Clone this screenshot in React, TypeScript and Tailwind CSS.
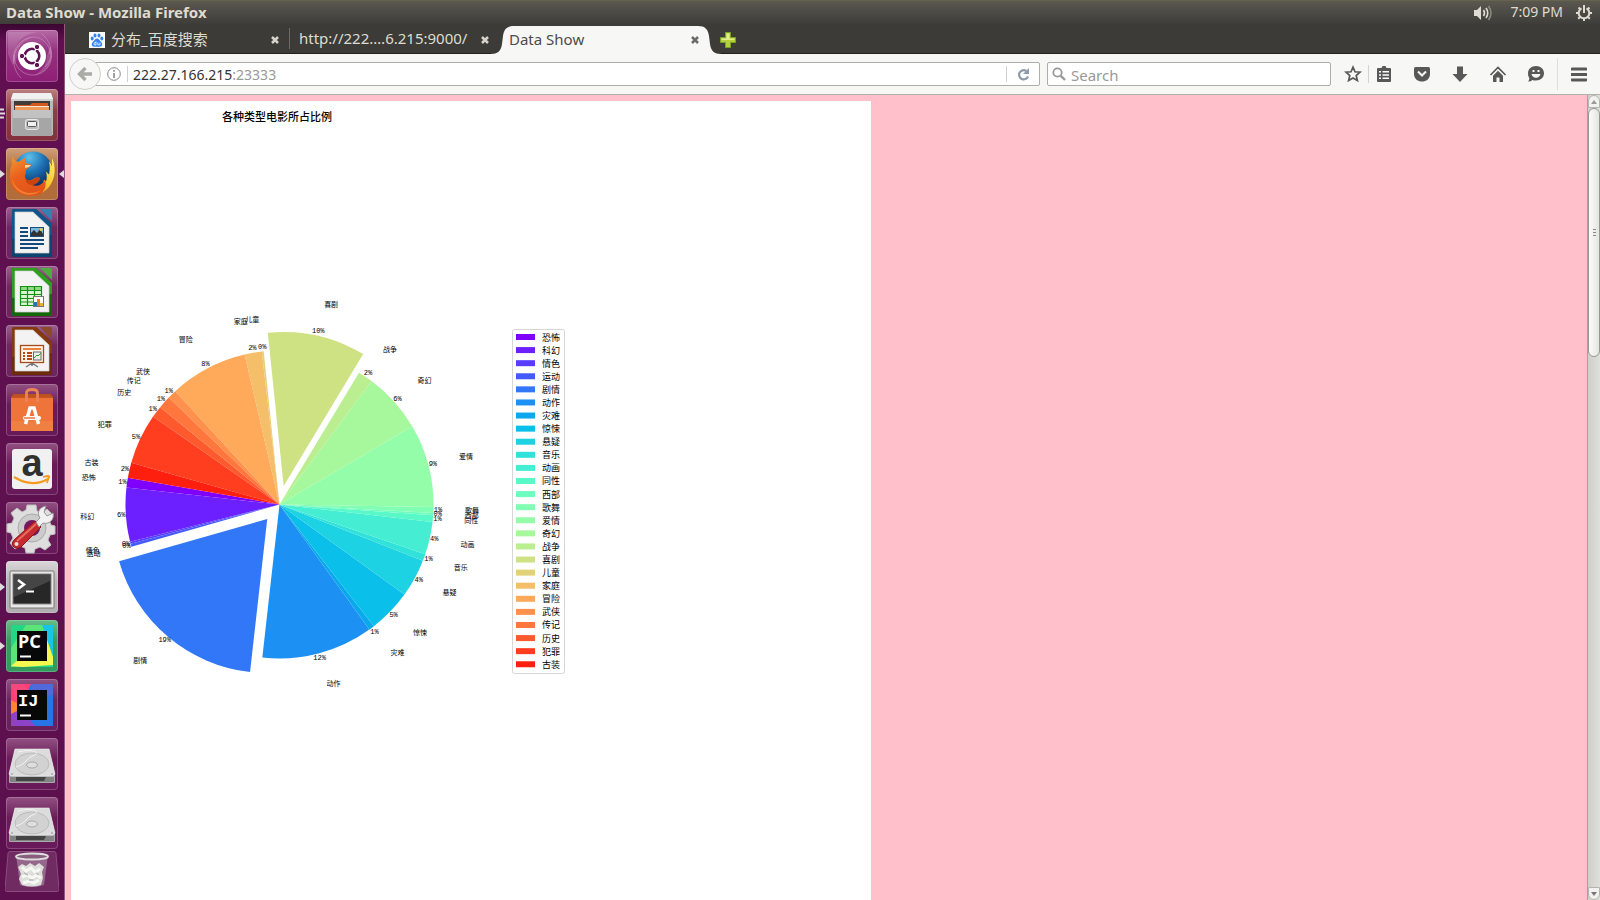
import type { ReactNode } from "react";

type Slice = { name: string; end: number; pct: string; exploded?: boolean };

// Slice boundaries in degrees, counter-clockwise, starting at START.
const START = 170;
const SLICES: Slice[] = [
  { name: "恐怖", end: 173.7, pct: "1%" },
  { name: "科幻", end: 194, pct: "6%" },
  { name: "情色", end: 194.8, pct: "0%" },
  { name: "运动", end: 195.9, pct: "0%" },
  { name: "剧情", end: 263.6, pct: "19%", exploded: true },
  { name: "动作", end: 305.7, pct: "12%" },
  { name: "灾难", end: 307.8, pct: "1%" },
  { name: "惊悚", end: 324.2, pct: "5%" },
  { name: "悬疑", end: 338.6, pct: "4%" },
  { name: "音乐", end: 341.2, pct: "1%" },
  { name: "动画", end: 353.5, pct: "4%" },
  { name: "同性", end: 356, pct: "1%" },
  { name: "西部", end: 356.8, pct: "0%" },
  { name: "歌舞", end: 359.1, pct: "1%" },
  { name: "爱情", end: 390.5, pct: "9%" },
  { name: "奇幻", end: 413.3, pct: "6%" },
  { name: "战争", end: 418.9, pct: "2%" },
  { name: "喜剧", end: 455.9, pct: "10%", exploded: true },
  { name: "儿童", end: 456.6, pct: "0%" },
  { name: "家庭", end: 463.1, pct: "2%" },
  { name: "冒险", end: 492.6, pct: "8%" },
  { name: "武侠", end: 496, pct: "1%" },
  { name: "传记", end: 500.8, pct: "1%" },
  { name: "历史", end: 505.2, pct: "1%" },
  { name: "犯罪", end: 524.3, pct: "5%" },
  { name: "古装", end: 530, pct: "2%" },
];

const CX = 208.5;
const CY = 403.5;
const R = 154;
const OFFSET = 19;

function rainbow(i: number) {
  const x = i / SLICES.length;
  const r = Math.min(1, Math.abs(2 * x - 0.5));
  const g = Math.sin(Math.PI * x);
  const b = Math.cos((Math.PI * x) / 2);
  return `rgb(${Math.round(r * 255)},${Math.round(g * 255)},${Math.round(b * 255)})`;
}

function polar(cx: number, cy: number, r: number, deg: number) {
  const a = (deg * Math.PI) / 180;
  return { x: cx + r * Math.cos(a), y: cy - r * Math.sin(a) };
}

function PieChart() {
  const parts = SLICES.map((s, i) => {
    const start = i === 0 ? START : SLICES[i - 1].end;
    const mid = (start + s.end) / 2;
    const c = polar(CX, CY, s.exploded ? OFFSET : 0, mid);
    const a = polar(c.x, c.y, R, start);
    const b = polar(c.x, c.y, R, s.end);
    const label = polar(c.x, c.y, R * 1.205, mid);
    const pct = polar(c.x, c.y, R * 1.03, mid);
    return { ...s, a, b, c, label, pctAt: pct, right: label.x > CX, fill: rainbow(i) };
  });
  return (
    <svg
      width="800"
      height="900"
      viewBox="0 0 800 900"
      className="shrink-0 bg-white font-['Noto_Sans_CJK_SC',sans-serif]"
      role="img"
      aria-label="各种类型电影所占比例"
    >
      <text x="206" y="20" fontSize="11" fontWeight="500" textAnchor="middle">各种类型电影所占比例</text>
      {parts.map((p) => (
        <path key={p.name} fill={p.fill} d={`M${p.c.x} ${p.c.y}L${p.a.x} ${p.a.y}A${R} ${R} 0 0 0 ${p.b.x} ${p.b.y}Z`} />
      ))}
      {parts.map((p) => (
        <text key={p.name} x={p.label.x} y={p.label.y + 2} fontSize="7" textAnchor={p.right ? "start" : "end"}>
          {p.name}
        </text>
      ))}
      <g className="font-['Liberation_Mono',monospace]">
        {parts.map((p) => (
          <text key={p.name} x={p.pctAt.x} y={p.pctAt.y + 2} fontSize="7" textAnchor="middle">
            {p.pct}
          </text>
        ))}
      </g>
      <rect x="441.5" y="228.5" width="52" height="344" rx="2" fill="#fff" stroke="#d6d6d6" />
      {parts.map((p, i) => (
        <g key={p.name}>
          <rect x="445" y={233 + i * 13.09} width="19" height="6" fill={p.fill} />
          <text x="471" y={239.5 + i * 13.09} fontSize="9">{p.name}</text>
        </g>
      ))}
    </svg>
  );
}

function DocShape({ dark, mid, fold, children }: { dark: string; mid: string; fold: string; children: ReactNode }) {
  return (
    <>
      <path d="M8 2h22l16 15v31a2 2 0 0 1-2 2H8a2 2 0 0 1-2-2V4a2 2 0 0 1 2-2z" fill={dark} />
      <path d="M8 2h22l16 15v11L6 32V4a2 2 0 0 1 2-2z" fill={mid} />
      <path d="M9 5h18l16 15v26H9z" fill="#f3f3f3" stroke="#d0d0d0" strokeWidth=".7" />
      <path d="M34 2h10a2 2 0 0 1 2 2v10z" fill={fold} />
      {children}
    </>
  );
}

const drive = (
  <>
    <path d="M9 11h34l6 25v8a1 1 0 0 1-1 1H4a1 1 0 0 1-1-1v-8z" fill="#a9a9a9" />
    <path d="M9 11h34l6 25q-1 2-3 2H6q-2 0-3-2z" fill="#dcdcdc" stroke="#ededed" strokeWidth=".6" />
    <ellipse cx="26" cy="26" rx="17" ry="11" fill="#d2d2d2" stroke="#b5b5b5" strokeWidth=".8" />
    <path d="M12 14c8-2 14-2 18 0s-6 4-9 8-8 6-11 7" fill="none" stroke="#f4f4f4" />
    <ellipse cx="26" cy="27" rx="5.500" ry="3" fill="#dedede" stroke="#aaa" />
    <path d="M4 39h44v5H4z" fill="#828282" />
    <path d="M10 39h30l-2 4H10z" fill="#444" />
    <circle cx="6" cy="36" r=".8" fill="#888" /><circle cx="46" cy="36" r=".8" fill="#888" />
  </>
);

type LauncherItem = { name: string; tile: string; art: ReactNode; running?: boolean; focused?: boolean; stack?: boolean };

const APPS: LauncherItem[] = [
  {
    name: "Dash",
    tile: "from-[#b56aa5] via-[#963180] to-[#8d1f76]",
    art: (
      <>
        <path d="M8 34C5 18 15 8 27 7c10 0 17 8 17 17M44 17c5 14-3 26-15 28-12 1-21-8-21-20M15 48C5 38 6 22 14 15M36 4c11 9 12 25 3 33" fill="none" stroke="#d49bc8" strokeOpacity=".5" strokeWidth="1" />
        <path d="M8 34C5 18 15 8 27 7c-10 4-15 9-15 18zM44 17c5 14-3 26-15 28 7-5 12-10 12-19zM2 2h30C16 4 6 14 7 36L2 24z" fill="#fff" fillOpacity=".16" />
        <circle cx="26" cy="26" r="14" fill="#fff" />
        <circle cx="26" cy="26" r="7.200" fill="none" stroke="#5d1450" strokeWidth="2.800" />
        <path d="M26 26l-12 0M26 26l6-10.500M26 26l6 10.500" stroke="#fff" strokeWidth="1.500" />
        <circle cx="26" cy="26" r="5.700" fill="#fff" />
        <g fill="#5d1450" stroke="#fff" strokeWidth="1"><circle cx="16" cy="26" r="2.700" /><circle cx="31" cy="17" r="2.700" /><circle cx="31" cy="35" r="2.700" /></g>
      </>
    ),
  },
  {
    name: "Files",
    tile: "from-[#bb7f80] via-[#8e4048] to-[#82303d]",
    stack: true,
    art: (
      <>
        <path d="M7 4h38l2 6v36H5V10z" fill="#b9b9b9" />
        <path d="M7 4h38l2 6H5z" fill="#f0f0f0" /><path d="M5 10h42v2H5z" fill="#d2d2d2" />
        <path d="M8 12h36v10H8z" fill="#403c39" />
        <path d="M9 16h15l2-2h16v8H9z" fill="#d4591e" />
        <path d="M9 17h34v1.500H9z" fill="#fbe6cf" /><path d="M9 18.500h34V22H9z" fill="#f09a55" />
        <path d="M7 22h38l1 25H6z" fill="#a6a6a6" /><path d="M7 21h38v8H7z" fill="#c2c2c2" />
        <rect x="19.500" y="30.500" width="13" height="10" rx="2" fill="#bdbdbd" stroke="#e8e8e8" />
        <rect x="21.500" y="32.500" width="9" height="5" rx="1" fill="#f1f1f1" stroke="#555" />
      </>
    ),
  },
  {
    name: "Firefox",
    tile: "from-[#cf9f7a] via-[#b06f3c] to-[#b16c39]",
    running: true,
    focused: true,
    art: (
      <>
        <defs>
          <radialGradient id="globe" cx=".4" cy=".15" r=".75"><stop offset="0" stopColor="#5fc0ea" /><stop offset=".5" stopColor="#1e74b6" /><stop offset="1" stopColor="#0d2f66" /></radialGradient>
          <linearGradient id="fox" x1="0" y1="0" x2=".5" y2="1"><stop offset="0" stopColor="#f49a35" /><stop offset=".5" stopColor="#e9601c" /><stop offset="1" stopColor="#e2541a" /></linearGradient>
          <linearGradient id="tail" x1="1" y1="0" x2=".3" y2="1"><stop offset="0" stopColor="#fff06a" /><stop offset=".6" stopColor="#f9c62c" /><stop offset="1" stopColor="#f08a25" /></linearGradient>
        </defs>
        <circle cx="27" cy="23" r="19.500" fill="url(#globe)" />
        <path d="M46 10c4 8 4 20-3 29-5 6-12 8.500-18 8.500 7-5 12-9 13-16l2 2c1-3 1-6 0-10l3 3c1-5 1-9 0-13 2 1 2 3 3 5z" fill="url(#tail)" />
        <path d="M7 8c0 3 2 5 5 6l7-4c0 2 0 4 1 5 2 1 4.500 1 5 2 0 2-4 3-5 5s1 3-1 5c-1 4 3 6 6 5s6-4 9-2c-1 4-4 6-8 7 5 2 10 0 13-5 2 6-1 12-6 15C20 50 9 46 5 36c-2-7-1-16 1-20-1-3 0-6 1-8z" fill="url(#fox)" />
        <path d="M34 30c-3-1-5 1-8 2-3 1-6 0-7-3 0 5 3 8 8 8 3-1 6-3 7-7z" fill="#c9430f" />
        <path d="M19 17l6 0-2 2-4 1z" fill="#fbd8a5" />
        <path d="M6 30c2 9 9 14 17 15 5 0 9-1 12-3-6 6-15 6-21 2-5-3-8-8-8-14z" fill="#f7913a" fillOpacity=".7" />
      </>
    ),
  },
  {
    name: "LibreOffice Writer",
    tile: "from-[#99608d] via-[#6f275e] to-[#6d255e]",
    art: (
      <DocShape dark="#0a4470" mid="#0e568a" fold="#3480ae">
        <path d="M14 21h8M14 25h8M14 29h8M14 33h24M14 37h24M14 41h18" stroke="#124a7c" strokeWidth="2" />
        <rect x="24.500" y="20.500" width="13" height="9" fill="#7db6df" stroke="#164e7c" />
        <path d="M25 29v-3l3-3 3 3 3-4 3 5v2z" fill="#333" /><circle cx="35" cy="22.500" r="1.500" fill="#f1d24b" />
      </DocShape>
    ),
  },
  {
    name: "LibreOffice Calc",
    tile: "from-[#99608d] via-[#6f275e] to-[#6d255e]",
    art: (
      <DocShape dark="#15680a" mid="#2d9f1d" fold="#4faa3f">
        <rect x="14" y="20" width="22" height="20" fill="#dcf5d5" />
        <path d="M14 20h22v4H14z" fill="#91d98a" />
        <path d="M14.500 20.500h21v19h-21zM14 24.500h22M14 28.500h22M14 32.500h22M14 36h22M21.500 20v20M28.500 20v20" fill="none" stroke="#139210" strokeWidth="1.200" />
        <rect x="27.500" y="30.500" width="10" height="10" fill="#fff" stroke="#777" />
        <path d="M28 36h3v4h-3z" fill="#1a78b6" /><path d="M31 33h3v7h-3z" fill="#ea7b22" /><path d="M34 37h3v3h-3z" fill="#e8b430" />
      </DocShape>
    ),
  },
  {
    name: "LibreOffice Impress",
    tile: "from-[#99608d] via-[#6f275e] to-[#6d255e]",
    art: (
      <DocShape dark="#6c2b0a" mid="#86390c" fold="#8c4a2b">
        <rect x="14.500" y="20.500" width="23" height="17" fill="#fff4e9" stroke="#a54c1f" strokeWidth="1.300" />
        <path d="M17 24h18" stroke="#e9823c" strokeWidth="2" />
        <path d="M17 28h2M17 31h2M17 34h2M21 28h5M21 31h5M21 34h5" stroke="#b34818" strokeWidth="2" />
        <rect x="27.500" y="27" width="7.500" height="8" fill="#eee" stroke="#666" /><path d="M28 33l3-3 1 1 3-3" fill="none" stroke="#28a228" />
        <path d="M26 38l-6 4M26 38l6 4M26 38v3" stroke="#777" strokeWidth="1.500" />
      </DocShape>
    ),
  },
  {
    name: "Ubuntu Software",
    tile: "from-[#925082] via-[#6a1c59] to-[#67195a]",
    art: (
      <>
        <path d="M7 10h38l2 4v33H5V14z" fill="#bf4f1d" />
        <path d="M5 14h42v33H5z" fill="#ee7439" /><path d="M5 37h42v10H5z" fill="#f08042" />
        <path d="M5 13h42" stroke="#c55829" strokeWidth="1" />
        <path d="M20.500 18V9q0-3.500 5.500-3.500T31.500 9v9" fill="none" stroke="#e98557" strokeWidth="2.800" />
        <path d="M19.500 40l4.500-16h4l4.500 16" fill="none" stroke="#fff" strokeWidth="3.500" />
        <rect x="17" y="32" width="18" height="4" rx="2" fill="#fff" /><path d="M18 34h11" stroke="#ed7437" strokeWidth="1.500" />
      </>
    ),
  },
  {
    name: "Amazon",
    tile: "from-[#925082] via-[#6a1c59] to-[#67195a]",
    art: (
      <>
        <rect x="6" y="6" width="40" height="40" rx="3" fill="#f1f1f1" />
        <text x="26" y="33" textAnchor="middle" fontSize="38" fontWeight="700" fill="#303030" fontFamily="Liberation Sans, sans-serif">a</text>
        <path d="M8 34q18 11 34 2" fill="none" stroke="#f79a20" strokeWidth="2.200" />
        <path d="M37 34q7-2 6 0t-2 6" fill="none" stroke="#f79a20" strokeWidth="1.800" />
      </>
    ),
  },
  {
    name: "System Settings",
    tile: "from-[#925082] via-[#6a1c59] to-[#67195a]",
    art: (
      <>
        <path d="M21 3h9l1 6 5 2 5-4 6 6-4 5 2 5 4 1v8l-5 1-2 5 3 5-6 5-5-3-5 2-1 4h-8l-1-5-5-2-5 3-5-6 3-5-2-5-4-1v-8l5-1 2-5-3-5 6-5 5 4 4-2z" fill="#dedede" stroke="#bdbdbd" />
        <circle cx="26" cy="26" r="14" fill="#cbcbcb" stroke="#aaa" />
        <circle cx="26" cy="26" r="8" fill="#751966" />
        <path d="M8 38L29 19l6 6-20 20q-5 3-8-1-2-3 1-6z" fill="#c52b2c" stroke="#8d1619" />
        <path d="M11 39l19-17" stroke="#e76c63" strokeWidth="2" /><circle cx="10.500" cy="42" r="2" fill="#f5dada" />
        <path d="M30 20l4-4c-4-6 0-11 6-12l-2 6 3 4 6-3c2 6-4 12-10 10l-4 4z" fill="#f1f1f1" stroke="#999" />
      </>
    ),
  },
  {
    name: "Terminal",
    tile: "from-[#dad7d8] via-[#b9b5b7] to-[#b2adb0]",
    running: true,
    art: (
      <>
        <rect x="4" y="10" width="44" height="37" rx="1" fill="#e7e7e7" stroke="#777" />
        <rect x="7" y="13" width="38" height="30" fill="#272727" stroke="#888" />
        <path d="M8 14h36v6L8 36z" fill="#454545" />
        <path d="M12 19l6 4.500-6 4.500" fill="none" stroke="#fff" strokeWidth="2.500" /><path d="M20 30.500h8" stroke="#fff" strokeWidth="2" />
      </>
    ),
  },
  {
    name: "PyCharm",
    tile: "from-[#67bd87] via-[#389b62] to-[#339a5e]",
    running: true,
    art: (
      <>
        <path d="M5 5h42v42H5z" fill="#23d786" /><path d="M35 5h12v30z" fill="#19c5e6" />
        <path d="M20 5h16l5 13-25 29H5V28z" fill="#5be477" /><path d="M34 20l5-6 8 23v8l-30 2-12-1z" fill="#f5f84e" />
        <path d="M11 11h30v30H11z" fill="#080808" /><path d="M14 36.500h11" stroke="#fff" strokeWidth="2" />
        <text x="12" y="28" fontSize="18" fontWeight="700" fill="#fff" fontFamily="Noto Sans, sans-serif">PC</text>
      </>
    ),
  },
  {
    name: "IntelliJ IDEA",
    tile: "from-[#925082] via-[#6a2860] to-[#67205d]",
    art: (
      <>
        <path d="M5 5h42v42H5z" fill="#2774e6" /><path d="M5 5h20L12 32 5 38z" fill="#fd3d73" />
        <path d="M5 5h12l12 12L12 32z" fill="#f7487e" /><path d="M5 21l10 5-7 13-3 3z" fill="#fc832f" />
        <path d="M25 5h22v10L24 26z" fill="#5269dc" /><path d="M5 35l10-5 14 17H5z" fill="#8e43c7" />
        <path d="M11 11h30v30H11z" fill="#080808" /><path d="M14 36.500h11" stroke="#fff" strokeWidth="2" />
        <text x="12" y="27" fontSize="17" fontWeight="700" fill="#fff" fontFamily="Liberation Mono, monospace">IJ</text>
      </>
    ),
  },
  { name: "Volume 1", tile: "from-[#925082] via-[#6a1c59] to-[#67195a]", art: drive },
  { name: "Volume 2", tile: "from-[#925082] via-[#6a1c59] to-[#67195a]", art: drive },
];

function Launcher() {
  return (
    <nav aria-label="Launcher" className="flex w-[65px] shrink-0 flex-col items-center border-r border-[#935783] bg-linear-to-b from-[#3a0730] via-[#610f50] via-2% to-[#5c104d] pt-1.5">
      <ul className="flex w-full flex-col items-center gap-[7px]">
        {APPS.map((app) => (
          <li key={app.name} className="relative flex w-full justify-center">
            <button type="button" aria-label={app.name} className={`block size-[52px] rounded-[4px] bg-linear-to-b via-40% ring-1 ring-inset ring-white/20 ${app.tile}`}>
              <svg width="52" height="52" viewBox="0 0 52 52" className="overflow-visible">{app.art}</svg>
            </button>
            {app.running && (
              <svg className="absolute top-[21px] left-0" width="5" height="10" viewBox="0 0 5 10"><path d="M0 1l5 4-5 4z" fill="#ddd" /></svg>
            )}
            {app.stack && (
              <svg className="absolute top-[19px] left-0" width="5" height="12" viewBox="0 0 5 12"><path d="M0 1.500h4M0 5.500h5M0 9.500h4" stroke="#ddd" strokeWidth="2" /></svg>
            )}
            {app.focused && (
              <svg className="absolute top-[21px] right-0" width="5" height="10" viewBox="0 0 5 10"><path d="M5 1L0 5l5 4z" fill="#ddd" /></svg>
            )}
          </li>
        ))}
      </ul>
      <button type="button" aria-label="Trash" className="mt-0.5">
        <svg width="54" height="42" viewBox="0 0 54 42">
          <path d="M5 .5h44q2 0 2 2l3 36q0 2-2 2H2q-2 0-2-2l3-36q0-2 2-2z" fill="#702c62" stroke="#8a4d7c" />
          <path d="M11 4h32l-4 30q-12 4-24 0z" fill="#ad8fa7" fillOpacity=".6" />
          <path d="M13 16l4-3 4 2 4-3 5 3 4-3 5 4-2 5 1 6-2 7q-9 3-19 0l-3-6 2-5z" fill="#dededa" />
          <path d="M17 16l4 4 5-3 4 4 5-3M17 26l5-2 5 3 5-3 4 3M18 32l6-2 5 2 5-3" fill="none" stroke="#f7f7f4" strokeWidth="3" />
          <path d="M19 22l4 2M31 22l3 2M24 29h4" stroke="#b8b8b4" strokeWidth="1.500" />
          <ellipse cx="27" cy="5.500" rx="16" ry="3" fill="#88607d" stroke="#dedede" strokeWidth="1.800" />
        </svg>
      </button>
    </nav>
  );
}

function CloseButton({ color }: { color: string }) {
  return (
    <button type="button" aria-label="Close tab" className="shrink-0">
      <svg width="10" height="10" viewBox="0 0 10 10"><path d="M2 2l6 6M8 2l-6 6" stroke={color} strokeWidth="2.500" /></svg>
    </button>
  );
}

function TabStrip() {
  return (
    <div className="flex h-[30px] shrink-0 items-stretch border-b border-[#22211e] bg-[#3c3b37] pt-0.5 text-[15px] text-[#dfdbd2]">
      <div className="flex w-[224px] items-center pr-[9px] pl-6">
        <svg width="16" height="16" viewBox="0 0 16 16" className="mr-1.5 shrink-0">
          <path d="M0 0h16v16H0z" fill="#fff" />
          <g fill="#3385f5"><ellipse cx="3.200" cy="6.500" rx="1.500" ry="2" /><ellipse cx="6" cy="3.400" rx="1.500" ry="2" /><ellipse cx="10" cy="3.400" rx="1.500" ry="2" /><ellipse cx="12.800" cy="6.500" rx="1.500" ry="2" /><path d="M8 6.500c2 0 2.500 2 4 3.300 2 1.700 1.500 5-1 5-1.500 0-4.500 0-6 0-2.500 0-3-3.300-1-5C5.500 8.500 6 6.500 8 6.500z" /></g>
          <path d="M7 9.500V13H5.500q-1-1.200 0-2.300H7M8.800 10.500v2.300H11v-2.300" fill="none" stroke="#fff" strokeWidth=".8" />
        </svg>
        <span className="flex-1">分布_百度搜索</span>
        <CloseButton color="#d8d4cc" />
      </div>
      <div className="mt-0.5 mb-1 w-px bg-[#6d6b65]" />
      <div className="flex w-[200px] items-center pl-[9px]">
        <span className="flex-1 pb-0.5 whitespace-nowrap">http://222.…6.215:9000/</span>
        <CloseButton color="#d8d4cc" />
      </div>
      <div className="relative -mb-px flex w-[232px] items-center pr-[22px] pl-[19px] text-[#4c4c4c]">
        <svg className="absolute inset-0" width="232" height="28" viewBox="0 2 232 28">
          <path d="M0 30c8 0 11-3 12-10l1-8C14 5 17 2 24 2h184c7 0 10 3 11 10l1 8c1 7 4 10 12 10z" fill="#f7f7f5" />
        </svg>
        <span className="relative flex-1 pb-0.5">Data Show</span>
        <span className="relative flex"><CloseButton color="#6b6b68" /></span>
      </div>
      <button type="button" aria-label="New tab" className="-ml-0.5 flex items-center">
        <svg width="16" height="16" viewBox="0 0 16 16"><path d="M5.500.5h5v5h5v5h-5v5h-5v-5h-5v-5h5z" fill="#b5cf3f" stroke="#77a324" /><path d="M6.500 1.500h3v5h5v1.500h-13V6.500h5z" fill="#e3ec8b" /></svg>
      </button>
    </div>
  );
}

function ToolButton({ label, width, children }: { label: string; width: string; children: ReactNode }) {
  return (
    <button type="button" aria-label={label} className={`flex h-8 shrink-0 items-center justify-center ${width}`}>
      <svg width="18" height="18" viewBox="0 0 18 18" fill="#585858">{children}</svg>
    </button>
  );
}

function Toolbar() {
  return (
    <div className="flex h-[41px] shrink-0 items-center border-b border-[#b2b2ac] bg-[#f7f7f5] pl-1 text-sm">
      <button type="button" aria-label="Back" className="relative z-10 -mr-2 flex size-8 shrink-0 items-center justify-center rounded-full border border-[#cfcfcb] bg-[#f7f7f5]">
        <svg width="16" height="16" viewBox="0 0 16 16"><path d="M8.500 2L2.500 8l6 6M3 8h12" fill="none" stroke="#aaaaa6" strokeWidth="3.300" /></svg>
      </button>
      <div className="flex h-6 min-w-0 flex-1 items-center rounded-[2px] border border-[#aeaea8] bg-white pl-[13px]">
        <svg width="14" height="14" viewBox="0 0 14 14" className="shrink-0"><circle cx="7" cy="7" r="6.300" fill="none" stroke="#888" /><path d="M7 3v1.800M7 6v5" stroke="#888" strokeWidth="1.600" /></svg>
        <span className="ml-[6px] h-4 w-px bg-[#d0d0cc]" />
        <input aria-label="Address" defaultValue="222.27.166.215" className="ml-[5px] field-sizing-content bg-transparent pt-0.5 text-[#333] outline-none" />
        <span className="flex-1 pt-0.5 text-[#999]">:23333</span>
        <span className="h-4 w-px bg-[#d0d0cc]" />
        <button type="button" aria-label="Reload" className="flex h-full w-8 items-center justify-center">
          <svg width="13" height="13" viewBox="0 0 13 13"><path d="M9.300 3A4.600 4.600 0 1 0 11 8.500" fill="none" stroke="#8d9aa8" strokeWidth="2.200" /><path d="M12 0v6H6z" fill="#8d9aa8" /></svg>
        </button>
      </div>
      <div className="ml-[7px] flex h-6 w-[284px] shrink items-center rounded-[2px] border border-[#aeaea8] bg-white pl-1">
        <svg width="14" height="14" viewBox="0 0 14 14" className="mr-[5px] shrink-0"><circle cx="5.500" cy="5.500" r="4.200" fill="none" stroke="#999" strokeWidth="1.800" /><path d="M8.800 8.800l4.200 4.200" stroke="#999" strokeWidth="2.400" /></svg>
        <input aria-label="Search" placeholder="Search" className="min-w-0 flex-1 bg-transparent pt-0.5 text-[15px] leading-5 outline-none placeholder:text-[#999]" />
      </div>
      <div className="ml-1.5 flex shrink-0 items-center">
        <ToolButton label="Bookmark" width="w-[31px]"><path d="M9 2.200l2 4.600 5 .4-3.800 3.300 1.200 5L9 12.900l-4.400 2.600 1.200-5L2 7.200l5-.4z" fill="none" stroke="#585858" strokeWidth="1.700" /></ToolButton>
        <span className="h-[18px] w-px bg-[#d3d3cf]" />
        <ToolButton label="Bookmarks list" width="w-[30px]">
          <path d="M3 3h3.500l1-2h3l1 2H15q1 0 1 1v12q0 1-1 1H3q-1 0-1-1V4q0-1 1-1z" />
          <path d="M4 6h2v1.500H4zM7.500 6H14v1.500H7.500zM4 9.200h2v1.500H4zM7.500 9.200H14v1.500H7.500zM4 12.500h2V14H4zM7.500 12.500H14V14H7.500z" fill="#fff" />
        </ToolButton>
        <span className="w-1" />
        <ToolButton label="Pocket" width="w-[38px]"><path d="M2.500 2h13q1.500 0 1.500 1.500V9c0 10-16 10-16 0V3.500Q1 2 2.500 2z" /><path d="M5 6.500l4 4 4-4" fill="none" stroke="#f7f7f5" strokeWidth="2" /></ToolButton>
        <ToolButton label="Downloads" width="w-[38px]"><path d="M6 1.500h6V9h4.500L9 17 1.500 9H6z" /></ToolButton>
        <ToolButton label="Home" width="w-[38px]"><path d="M1.500 10L9 2.500l7.500 7.500" fill="none" stroke="#585858" strokeWidth="1.700" /><path d="M4 10.800L9 5.800l5 5V17h-3.500v-4.500h-3V17H4z" /></ToolButton>
        <ToolButton label="Hello" width="w-[38px]"><path d="M9 1c4.500 0 8 3 8 7.300S13.500 15.500 9 15.500c-1.500 0-2.500-.2-3.500-.6Q4 16.500 1 16.500q1.500-1.500 1.300-3.500A7 7 0 0 1 1 8.300C1 4 4.500 1 9 1z" /><path d="M4.500 9h9q-1 3.800-4.500 3.800T4.500 9zM5.500 5h2v2h-2zM10.500 5h2v2h-2z" fill="#f7f7f5" /></ToolButton>
        <span className="ml-0.5 h-8 w-px bg-[#dededa]" />
        <ToolButton label="Menu" width="w-[42px]"><path d="M2 2.500h14q1 0 1 1v2H1v-2q0-1 1-1zM1 8h16v3H1zM1 13.500h16v2q0 1-1 1H2q-1 0-1-1z" /></ToolButton>
      </div>
    </div>
  );
}

function Scrollbar() {
  return (
    <div className="flex w-[13px] shrink-0 flex-col border-l border-[#a5a5a0] bg-linear-to-r from-[#cfcfca] to-[#dfdfdb]">
      <button type="button" aria-label="Scroll up" className="flex h-[13px] shrink-0 items-center justify-center rounded-t-full border border-[#b5b5b0] bg-[#f1f1ef]">
        <svg width="6" height="4" viewBox="0 0 6 4"><path d="M0 4l3-4 3 4z" fill="#999" /></svg>
      </button>
      <div className="min-h-0 flex-1">
        <div className="flex h-[32%] flex-col items-center justify-center gap-0.5 rounded-full border border-[#989892] bg-linear-to-r from-[#fbfbfa] to-[#e4e4e0]">
          <span className="h-px w-[3px] bg-[#888]" />
          <span className="h-px w-[3px] bg-[#888]" />
          <span className="h-px w-[3px] bg-[#888]" />
        </div>
      </div>
      <button type="button" aria-label="Scroll down" className="flex h-[13px] shrink-0 items-center justify-center rounded-b-full border border-[#b5b5b0] bg-[#f1f1ef]">
        <svg width="6" height="4" viewBox="0 0 6 4"><path d="M0 0l3 4 3-4z" fill="#777" /></svg>
      </button>
    </div>
  );
}

export default function App() {
  return (
    <div className="flex h-screen flex-col overflow-hidden font-['Noto_Sans','Noto_Sans_CJK_SC',sans-serif]">
      <header className="flex h-6 shrink-0 items-center border-t border-[#66634f] bg-linear-to-b from-[#5b5850] to-[#3e3d39] pr-2 pl-1.5 text-sm text-[#dfdbd2]">
        <h1 className="flex-1 pb-0.5 text-[15px] leading-5 font-bold">Data Show - Mozilla Firefox</h1>
        <svg width="20" height="18" viewBox="0 0 20 18" className="mr-[17px]">
          <path d="M1 6h3l4-4v14l-4-4H1z" fill="#dfdbd2" />
          <path d="M10.500 6q2 3 0 6M13 4q3.500 5 0 10" fill="none" stroke="#dfdbd2" strokeWidth="1.600" /><path d="M15.500 2q5 7 0 14" fill="none" stroke="#8b8880" strokeWidth="1.600" />
        </svg>
        <span className="mr-[13px] pb-0.5">7:09 PM</span>
        <svg width="16" height="16" viewBox="0 0 16 16">
          <path d="M5.500 3.300a5.300 5.300 0 1 0 5 0" fill="none" stroke="#dfdbd2" strokeWidth="2" />
          <path d="M8 0v8M1 8H-.5M15 8h1.500M8 14v2M2.500 2.500l2 2M13.500 2.500l-2 2M3.800 12.200l-1.600 1.600M12.200 12.200l1.600 1.600M0 8h3M13 8h3" stroke="#dfdbd2" strokeWidth="2" />
        </svg>
      </header>
      <div className="flex min-h-0 flex-1">
        <Launcher />
        <div className="flex min-w-0 flex-1 flex-col">
          <TabStrip />
          <Toolbar />
          <div className="flex min-h-0 flex-1">
            <main className="flex min-w-0 flex-1 items-start overflow-hidden bg-[#ffc0cb] pt-1.5 pl-1.5">
              <PieChart />
            </main>
            <Scrollbar />
          </div>
        </div>
      </div>
    </div>
  );
}
